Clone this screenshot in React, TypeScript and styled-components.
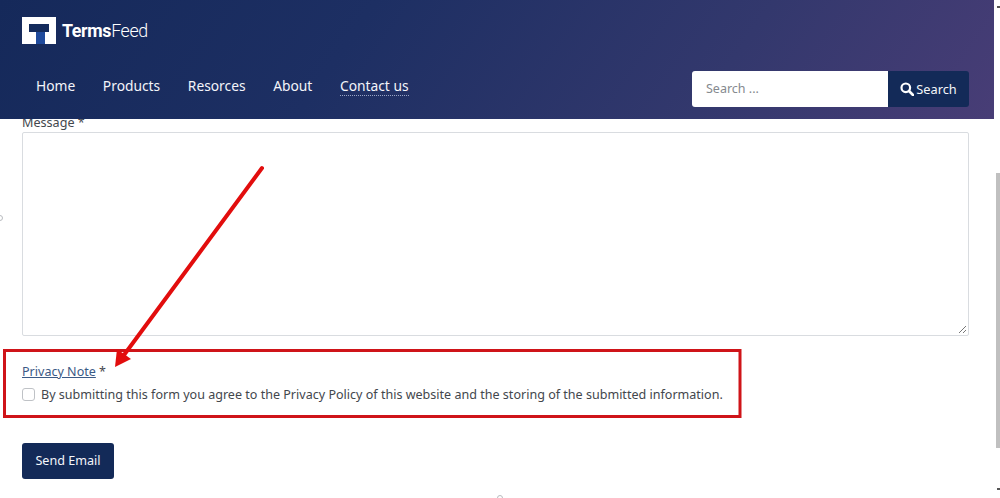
import React from "react";
import styled, { createGlobalStyle } from "styled-components";

const Global = createGlobalStyle`
  html, body { margin: 0; padding: 0; background: #fff; overflow: hidden; }
  #root { width: 1000px; height: 498px; }
  * { box-sizing: border-box; }
`;

const Page = styled.div`
  position: relative;
  display: flex;
  width: 1000px;
  height: 498px;
  overflow: hidden;
  background: #fff;
  font-family: "Noto Sans", "Open Sans", sans-serif;
  color: #43474d;
`;

const Viewport = styled.div`
  width: 994px;
  display: flex;
  flex-direction: column;
`;

const Header = styled.header`
  position: relative;
  z-index: 2;
  height: 119px;
  flex: none;
  padding: 17px 25px 0 22px;
  background: linear-gradient(125deg, #15295a 0%, #1d2f63 35%, #33386d 72%, #483d76 100%);
`;

const Brand = styled.div`
  display: flex;
  align-items: center;
  gap: 6px;
  height: 27px;
`;

const BrandName = styled.span`
  font-family: Roboto, "Noto Sans", sans-serif;
  font-size: 17.8px;
  letter-spacing: -0.35px;
  color: #fff;
  font-weight: 300;
  b { font-weight: 700; }
`;

const NavRow = styled.div`
  display: flex;
  align-items: center;
  justify-content: space-between;
  margin-top: 27px;
  height: 36px;
`;

const Nav = styled.nav`
  display: flex;
  gap: 27.6px;
  padding-left: 14px;
  margin-bottom: 6px;
`;

const NavLink = styled.a<{ $active?: boolean }>`
  font-size: 13.8px;
  line-height: 19px;
  color: #f4f5fa;
  ${(p) => p.$active && "border-bottom: 1px dotted #9aa5c6;"}
`;

const SearchForm = styled.form`
  display: flex;
  height: 36px;
`;

const SearchField = styled.div`
  width: 196px;
  height: 36px;
  padding: 0 0 2px 14px;
  display: flex;
  align-items: center;
  background: #fff;
  border-radius: 3px 0 0 3px;
  font-size: 12.5px;
  color: #85898e;
`;

const SearchButton = styled.div`
  width: 81px;
  height: 36px;
  padding-bottom: 1px;
  display: flex;
  align-items: center;
  justify-content: center;
  gap: 2px;
  background: #132a58;
  border-radius: 0 3px 3px 0;
  color: #f4f6fa;
  font-size: 12.8px;
`;

const Content = styled.main`
  flex: 1;
  margin-top: -5px;
  padding: 0 25px 0 22px;
`;

const Label = styled.div`
  font-size: 12.6px;
  line-height: 18px;
`;

const MessageBox = styled.div`
  position: relative;
  height: 204px;
  border: 1px solid #d9dce0;
  border-radius: 2px;
  background: #fff;
`;

const Grip = styled.svg`
  position: absolute;
  right: 1px;
  bottom: 1px;
`;

const PrivacyLabel = styled.div`
  margin-top: 27px;
  font-size: 12.55px;
  line-height: 18px;
  a { color: #3b5a86; text-decoration: underline; }
`;

const ConsentRow = styled.label`
  display: flex;
  align-items: center;
  gap: 6px;
  margin-top: 4px;
  height: 18px;
  font-size: 12.55px;
  white-space: nowrap;
`;

const Check = styled.span`
  width: 13px;
  height: 13px;
  flex: none;
  border: 1px solid #bfc2c6;
  border-radius: 3px;
  background: #fff;
`;

const SendButton = styled.div`
  display: flex;
  align-items: center;
  justify-content: center;
  width: 92px;
  height: 36px;
  margin-top: 40px;
  padding-bottom: 1px;
  background: #132a58;
  border-radius: 3px;
  color: #f5f7fb;
  font-size: 12.6px;
`;

const Scrollbar = styled.div`
  position: relative;
  width: 6px;
  flex: none;
  padding: 173px 0 50px 2px;
  background: #fff;
`;

const Thumb = styled.div`
  height: 100%;
  background: #c0c0c0;
`;

const ScrollArrow = styled.span<{ $down?: boolean }>`
  position: absolute;
  right: 0;
  width: 3px;
  height: 2px;
  background: #555;
  ${(p) => (p.$down ? "bottom: 8px;" : "top: 6px;")}
`;

const Speck = styled.span<{ $bottom?: boolean }>`
  position: absolute;
  z-index: 1;
  width: 6px;
  height: 6px;
  border: 1px solid #b9bcc0;
  border-radius: 50%;
  ${(p) => (p.$bottom ? "left: 497px; top: 495px;" : "left: -3px; top: 215px;")}
`;

const Annotation = styled.svg`
  position: absolute;
  inset: 0;
  z-index: 3;
  pointer-events: none;
`;

function Logo() {
  return (
    <svg width="34" height="27" viewBox="0 0 34 27">
      <rect width="34" height="27" fill="#fff" />
      <path d="M14 14H23V27H14Z" fill="#1f4a9c" />
      <path d="M7 7H27V15H7Z" fill="#142b5c" />
    </svg>
  );
}

function SearchIcon() {
  return (
    <svg width="14" height="14" viewBox="0 0 14 14">
      <circle cx="5.8" cy="5.8" r="4.3" fill="none" stroke="#fff" strokeWidth="2.2" />
      <path d="M9 9L13 13" stroke="#fff" strokeWidth="2.6" strokeLinecap="round" />
    </svg>
  );
}

export default function App() {
  return (
    <Page>
      <Global />
      <Viewport>
        <Header>
          <Brand>
            <Logo />
            <BrandName>
              <b>Terms</b>Feed
            </BrandName>
          </Brand>
          <NavRow>
            <Nav>
              <NavLink>Home</NavLink>
              <NavLink>Products</NavLink>
              <NavLink>Resorces</NavLink>
              <NavLink>About</NavLink>
              <NavLink $active>Contact us</NavLink>
            </Nav>
            <SearchForm>
              <SearchField>Search ...</SearchField>
              <SearchButton>
                <SearchIcon />
                Search
              </SearchButton>
            </SearchForm>
          </NavRow>
        </Header>
        <Content>
          <Label>Message *</Label>
          <MessageBox>
            <Grip width="9" height="9" viewBox="0 0 9 9">
              <path d="M1 8L8 1M5 8L8 5" stroke="#777" strokeWidth="1" />
            </Grip>
          </MessageBox>
          <PrivacyLabel>
            <a>Privacy Note</a> *
          </PrivacyLabel>
          <ConsentRow>
            <Check />
            By submitting this form you agree to the Privacy Policy of this website and the storing of the submitted information.
          </ConsentRow>
          <SendButton>Send Email</SendButton>
        </Content>
      </Viewport>
      <Scrollbar>
        <ScrollArrow />
        <Thumb />
        <ScrollArrow $down />
      </Scrollbar>
      <Speck />
      <Speck $bottom />
      <Annotation width="1000" height="498" viewBox="0 0 1000 498">
        <rect x="4.5" y="350.5" width="735.5" height="66" fill="none" stroke="#cf1419" strokeWidth="3" />
        <path d="M262 168L124 355" stroke="#e20d0d" strokeWidth="4" strokeLinecap="round" />
        <path d="M115 367L117 349L131 359Z" fill="#e20d0d" />
      </Annotation>
    </Page>
  );
}
